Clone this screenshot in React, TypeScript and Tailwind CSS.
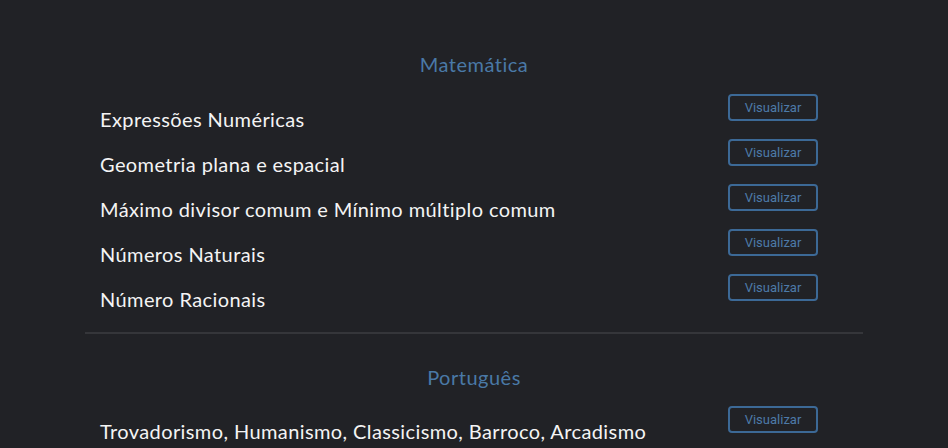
const sections = [
  {
    title: 'Matemática',
    items: [
      'Expressões Numéricas',
      'Geometria plana e espacial',
      'Máximo divisor comum e Mínimo múltiplo comum',
      'Números Naturais',
      'Número Racionais',
    ],
  },
  {
    title: 'Português',
    items: ['Trovadorismo, Humanismo, Classicismo, Barroco, Arcadismo'],
  },
];

function Row({ label }: { label: string }) {
  return (
    <div className="flex h-[45px] items-start justify-between pl-[15px] pr-[45px]">
      <span className="pt-[10px] text-[20px] leading-[30px] tracking-[0.4px] text-[#f4f4f4]">{label}</span>
      <button className="h-[27px] w-[90px] rounded-[4px] border-2 border-[#3c6996] font-['Roboto',sans-serif] text-[13px] text-[#4d7aa8]">
        Visualizar
      </button>
    </div>
  );
}

export default function App() {
  return (
    <div className="min-h-screen bg-[#212226] font-['Lato','Noto_Sans',sans-serif]">
      <div className="mx-auto w-[778px]">
        {sections.map((s, i) => (
          <section key={s.title} className={i === 0 ? 'pt-[50px]' : 'pt-[29px]'}>
            <h2 className="text-center text-[20px] leading-[28px] tracking-[0.5px] text-[#4a79a6]">{s.title}</h2>
            <div className={i === 0 ? 'mt-[16px]' : 'mt-[15px]'}>
              {s.items.map((item) => (
                <Row key={item} label={item} />
              ))}
            </div>
            {i === 0 && <hr className="mt-[13px] border-t-2 border-[#35363a]" />}
          </section>
        ))}
      </div>
    </div>
  );
}
